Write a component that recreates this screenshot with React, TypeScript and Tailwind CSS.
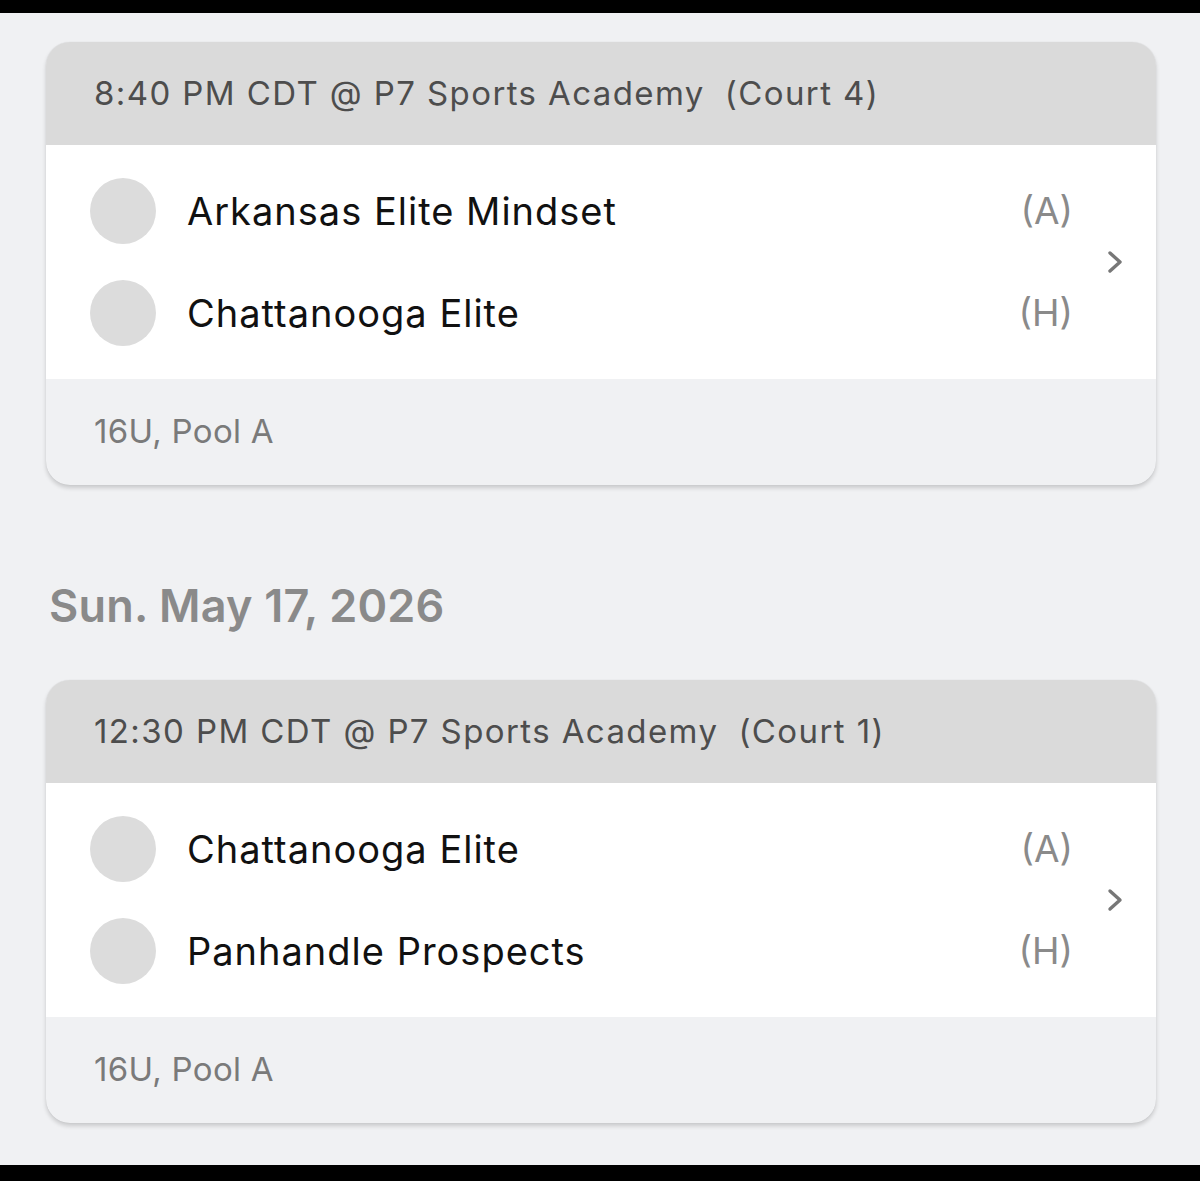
import React from 'react';

type Team = { name: string; side: string };
type Game = { time: string; court: string; teams: Team[]; pool: string };

const games: { date?: string; game: Game }[] = [
  {
    game: {
      time: '8:40 PM CDT @ P7 Sports Academy',
      court: '(Court 4)',
      teams: [
        { name: 'Arkansas Elite Mindset', side: '(A)' },
        { name: 'Chattanooga Elite', side: '(H)' },
      ],
      pool: '16U, Pool A',
    },
  },
  {
    date: 'Sun. May 17, 2026',
    game: {
      time: '12:30 PM CDT @ P7 Sports Academy',
      court: '(Court 1)',
      teams: [
        { name: 'Chattanooga Elite', side: '(A)' },
        { name: 'Panhandle Prospects', side: '(H)' },
      ],
      pool: '16U, Pool A',
    },
  },
];

function GameCard({ game }: { game: Game }) {
  return (
    <div className="w-[1110px] rounded-[24px] overflow-hidden bg-[#f0f1f3] shadow-[0_3px_4px_rgba(0,0,0,0.16),0_0_1px_rgba(0,0,0,0.12)]">
      {/* header */}
      <div className="h-[103px] bg-[#dadada] flex items-center pl-[48px] text-[33px] text-[#4d4d4d] tracking-[1.4px]">
        <span>{game.time}</span>
        <span className="ml-[20px]">{game.court}</span>
      </div>

      {/* teams */}
      <div className="h-[234px] bg-white flex items-center pl-[44px] pr-[31px]">
        <div className="flex-1 flex flex-col gap-[36px]">
          {game.teams.map((t) => (
            <div key={t.name + t.side} className="h-[66px] flex items-center">
              <div className="w-[66px] h-[66px] rounded-full bg-[#dcdcdc]" />
              <div className="ml-[31px] flex-1 text-[38px] text-[#111] tracking-[1px]">{t.name}</div>
              <div className="text-[37px] text-[#8a8a8a]">{t.side}</div>
            </div>
          ))}
        </div>
        <svg className="ml-[32px] w-[20px] h-[30px]" viewBox="0 0 20 30" fill="none">
          <path d="M5 6 L15 15 L5 24" stroke="#777" strokeWidth="3.4" strokeLinecap="round" strokeLinejoin="round" />
        </svg>
      </div>

      {/* footer */}
      <div className="h-[106px] flex items-center pl-[48px] text-[33px] text-[#7a7a7a] tracking-[0.3px]">
        {game.pool}
      </div>
    </div>
  );
}

export default function App() {
  return (
    <div className="w-[1200px] h-[1181px] flex flex-col bg-[#f0f1f3] font-['Inter','Liberation_Sans',sans-serif] overflow-hidden">
      <div className="h-[13px] bg-black shrink-0" />
      <div className="flex-1 flex flex-col pl-[46px] pt-[29px]">
        {games.map((g, i) => (
          <div key={i} className="flex flex-col">
            {g.date && (
              <div className="h-[195px] flex items-center pl-[3px] pt-[46px] text-[45px] font-semibold text-[#8a8a8a] tracking-[0.2px]">
                {g.date}
              </div>
            )}
            <GameCard game={g.game} />
          </div>
        ))}
      </div>
      <div className="h-[16px] bg-black shrink-0" />
    </div>
  );
}
